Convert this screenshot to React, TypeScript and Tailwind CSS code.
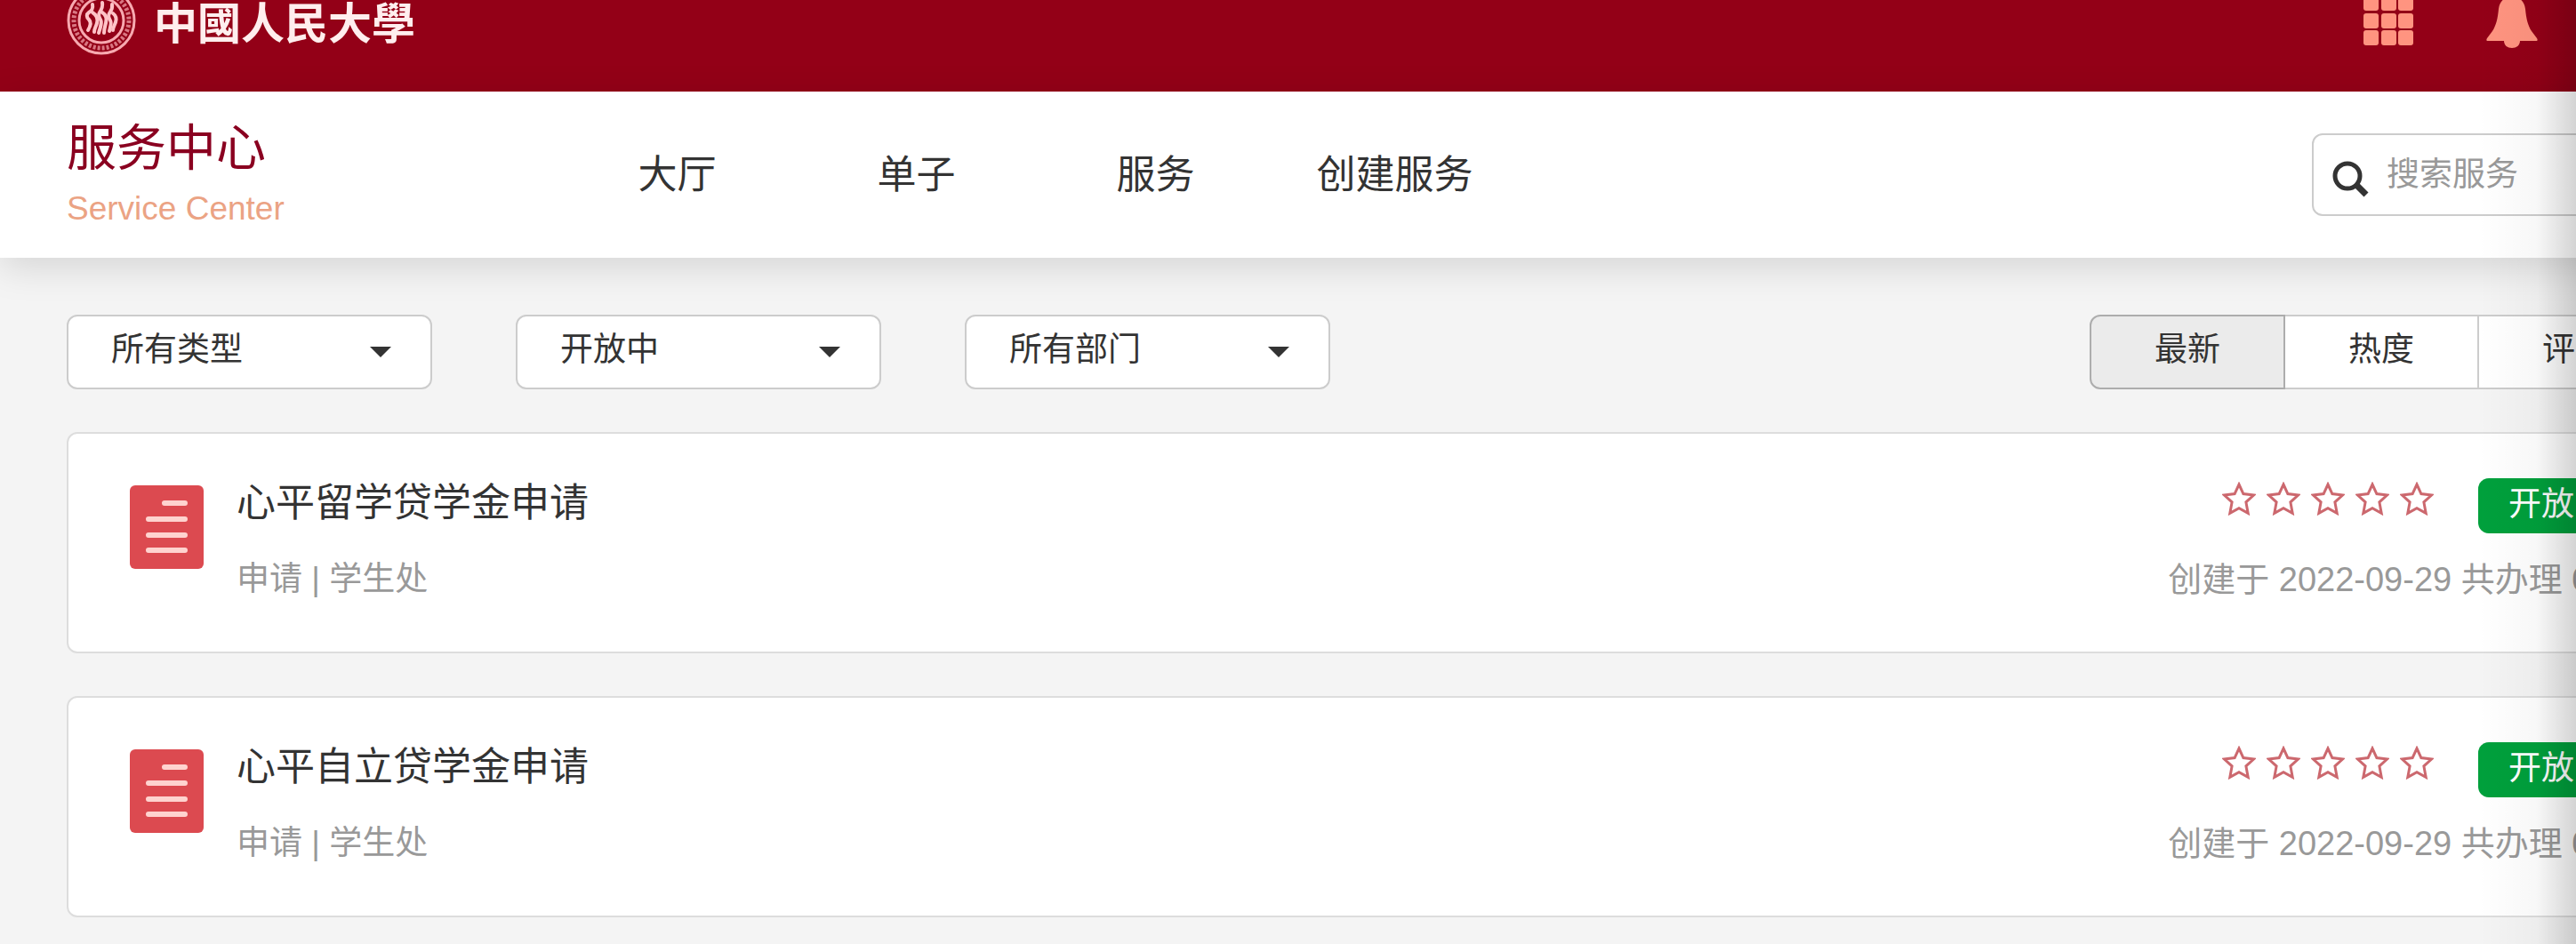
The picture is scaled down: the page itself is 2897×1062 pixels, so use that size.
import { useState } from "react";

const navItems = ["大厅", "单子", "服务", "创建服务"];

const filters = [
  { label: "类型", options: ["所有类型", "申请"] },
  { label: "状态", options: ["开放中", "已关闭"] },
  { label: "部门", options: ["所有部门", "学生处"] },
];

const sorts = ["最新", "热度", "评分"];

const services = [
  { title: "心平留学贷学金申请", type: "申请", dept: "学生处", date: "2022-09-29", count: 0 },
  { title: "心平自立贷学金申请", type: "申请", dept: "学生处", date: "2022-09-29", count: 0 },
];

function Emblem() {
  return (
    <svg className="w-[78px] h-[78px] shrink-0" viewBox="0 0 78 78" fill="none" stroke="#f7a9b0">
      <circle cx="39" cy="39" r="37" strokeWidth="3" />
      <circle cx="39" cy="39" r="31" strokeWidth="5" strokeDasharray="3 2" opacity="0.7" />
      <circle cx="39" cy="39" r="25" strokeWidth="3" />
      <g strokeWidth="4" strokeLinecap="round" stroke="#ffc4c8">
        <path d="M29 21c1 5-1 7-4 9s-3 5 0 8 2 7-1 12" />
        <path d="M29 30c5 3 6 8 5 12s-3 6-3 10" />
        <path d="M40 19c1 5-1 8-3 11s-1 5 1 8 0 9-2 15" />
        <path d="M40 30c5 3 5 8 4 12s-2 7-2 11" />
        <path d="M51 21c1 5-1 7-3 10s-1 5 1 8 0 7-1 12" />
        <path d="M52 31c4 3 4 7 3 10s-3 6-3 9" />
      </g>
    </svg>
  );
}

function AppsIcon() {
  return (
    <svg className="w-14 h-14" viewBox="0 0 56 56" fill="#ff9480">
      {[0, 20, 39].map((y) =>
        [0, 20, 39].map((x) => <rect key={`${x}-${y}`} x={x} y={y} width="17" height="17" rx="3" />)
      )}
    </svg>
  );
}

function BellIcon() {
  return (
    <svg className="w-[58px] h-[62px]" viewBox="0 0 58 62" fill="#ff9480">
      <path d="M29 0a5 5 0 0 1 5 5c6 2 9 6 10 13 1 11 3 19 7 25l6 8c1 2 1 3-1 3H38c0 5-4 8-9 8s-9-3-9-8H2c-2 0-2-1-1-3l6-8c4-6 6-14 7-25 1-7 4-11 10-13a5 5 0 0 1 5-5z" />
    </svg>
  );
}

function FormIcon() {
  return (
    <svg className="w-[83px] h-[94px] shrink-0" viewBox="0 0 83 94">
      <rect width="83" height="94" rx="6" fill="#dc4a50" />
      <g stroke="#ffd3cf" strokeWidth="6" strokeLinecap="round">
        <path d="M39 20h23M21 38h41M21 56h41M21 73h41" />
      </g>
    </svg>
  );
}

function Stars() {
  return (
    <div className="flex gap-3 pt-1" role="img" aria-label="0 / 5">
      {[1, 2, 3, 4, 5].map((n) => (
        <svg key={n} className="w-[38px] h-[38px]" viewBox="0 0 38 38" fill="none" stroke="#cc686e" strokeWidth="3">
          <path d="M19 3l4.9 10.6 11.6 1.4-8.6 7.9 2.3 12.5L19 29.8l-10.2 5.6 2.3-12.5L2.5 15l11.6-1.4z" />
        </svg>
      ))}
    </div>
  );
}

export default function App() {
  const [sort, setSort] = useState("最新");

  return (
    <div className="relative min-h-screen overflow-hidden bg-[#f4f4f4] text-[37px] leading-[56px] text-[#333] font-['Liberation_Sans','Noto_Sans_CJK_SC',sans-serif]">
      <header className="-mt-[57px] h-[160px] pl-[75px] pr-[43px] flex items-center justify-between bg-[#930017]">
        <a href="#" className="flex items-center gap-5">
          <Emblem />
          <span className="text-[49px] font-bold text-[#ffeeee] whitespace-nowrap font-['Noto_Sans_CJK_TC',sans-serif]">
            中國人民大學
          </span>
        </a>
        <div className="flex items-center gap-[82px]">
          <button aria-label="应用">
            <AppsIcon />
          </button>
          <button aria-label="通知">
            <BellIcon />
          </button>
        </div>
      </header>

      <div className="relative h-[187px] pl-[75px] -mr-[109px] flex items-center bg-white shadow-[0_10px_40px_rgba(0,0,0,0.13)]">
        <div className="w-[552px] shrink-0">
          <h1 className="text-[56px] leading-[72px] text-[#8a0020]">服务中心</h1>
          <p className="mt-1 text-[#eba384]">Service Center</p>
        </div>
        <nav className="flex">
          {navItems.map((item) => (
            <a key={item} href="#" className="w-[269px] text-center text-[44px]">
              {item}
            </a>
          ))}
        </nav>
        <label className="ml-auto w-[406px] h-[93px] shrink-0 pl-5 flex items-center gap-5 rounded-xl border-2 border-[#ccc] bg-white">
          <svg className="mt-2 w-[42px] h-[42px] shrink-0" viewBox="0 0 42 42" fill="none" stroke="#333" strokeWidth="5">
            <circle cx="18" cy="18" r="14" />
            <path d="M28 28l11 11" strokeWidth="7" />
          </svg>
          <input
            type="search"
            aria-label="搜索服务"
            placeholder="搜索服务"
            className="w-full min-w-0 outline-none placeholder:text-[#999]"
          />
        </label>
      </div>

      <main className="pl-[75px] -mr-[109px] pt-16">
        <div className="flex justify-between pb-12">
          <div className="flex gap-[94px]">
            {filters.map((f) => (
              <div key={f.label} className="relative w-[411px]">
                <select
                  aria-label={f.label}
                  className="w-full h-[84px] pl-12 pb-1 appearance-none rounded-xl border-2 border-[#ccc] bg-white"
                >
                  {f.options.map((o) => (
                    <option key={o}>{o}</option>
                  ))}
                </select>
                <svg className="absolute right-[46px] top-9 w-6 h-3 pointer-events-none" viewBox="0 0 24 12" fill="#333">
                  <path d="M0 0h24L12 12z" />
                </svg>
              </div>
            ))}
          </div>
          <div className="flex">
            {sorts.map((s) => (
              <button
                key={s}
                onClick={() => setSort(s)}
                className={`h-[84px] w-[220px] -ml-[2px] pb-1 border-2 first:rounded-l-xl last:rounded-r-xl ${
                  sort === s ? "relative bg-[#ebebeb] border-[#adadad]" : "bg-white border-[#ccc]"
                }`}
              >
                {s}
              </button>
            ))}
          </div>
        </div>

        <ul className="space-y-12">
          {services.map((s) => (
            <li
              key={s.title}
              className="h-[249px] pt-12 pl-[69px] pr-[42px] flex rounded-xl border-2 border-[#ddd] bg-white"
            >
              <div className="pt-[10px]">
                <FormIcon />
              </div>
              <div className="ml-[37px]">
                <h2 className="text-[44px] leading-[60px]">{s.title}</h2>
                <p className="mt-7 text-[#999]">
                  {s.type} | {s.dept}
                </p>
              </div>
              <div className="ml-auto pt-0.5 flex flex-col items-end">
                <div className="flex gap-[50px]">
                  <Stars />
                  <span className="w-[175px] h-[62px] pl-[34px] leading-[60px] rounded-xl bg-[#00a03c] text-white">
                    开放中
                  </span>
                </div>
                <p className="mt-6 text-[38px] text-[#999] whitespace-nowrap">
                  创建于 {s.date} 共办理 {s.count} 次
                </p>
              </div>
            </li>
          ))}
        </ul>
      </main>

      {/* fade at the right edge */}
      <div className="absolute inset-y-0 right-0 w-[110px] pointer-events-none bg-linear-to-r from-transparent via-black/3 via-60% to-black/17" />
    </div>
  );
}
